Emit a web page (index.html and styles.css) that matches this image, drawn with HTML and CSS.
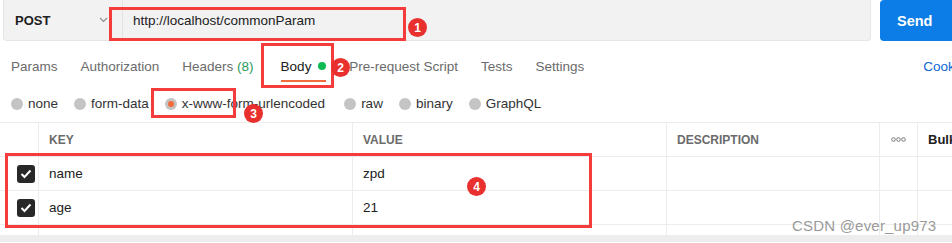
FILE: index.html
```html
<!DOCTYPE html>
<html lang="en">
<head>
    <meta charset="UTF-8">
    <title>POST commonParam</title>
    <link rel="stylesheet" href="styles.css">
</head>
<body>
    <div class="page">
        <!-- Request bar -->
        <div class="request-bar">
            <div class="url-box">
                <div class="method">
                    <span>POST</span>
                    <svg class="chevron" width="9" height="6" viewBox="0 0 9 6"><path d="M1 1l3.5 3.5L8 1" fill="none" stroke="#8a8a8a" stroke-width="1.1"/></svg>
                </div>
                <div class="url">http://localhost/commonParam</div>
            </div>
            <button class="send-btn">Send</button>
        </div>

        <!-- Tabs -->
        <div class="tabs">
            <span class="tab">Params</span>
            <span class="tab">Authorization</span>
            <span class="tab">Headers <em class="count">(8)</em></span>
            <span class="tab active">Body <i class="dot"></i></span>
            <span class="tab">Pre-request Script</span>
            <span class="tab">Tests</span>
            <span class="tab">Settings</span>
            <span class="tab cookies">Cookies</span>
        </div>

        <!-- Body types -->
        <div class="body-types">
            <label class="radio"><i class="circle"></i>none</label>
            <label class="radio"><i class="circle"></i>form-data</label>
            <label class="radio"><i class="circle checked"></i>x-www-form-urlencoded</label>
            <label class="radio"><i class="circle"></i>raw</label>
            <label class="radio"><i class="circle"></i>binary</label>
            <label class="radio"><i class="circle"></i>GraphQL</label>
        </div>

        <!-- Params table -->
        <div class="table-wrap">
            <div class="table">
                <div class="cell head"></div>
                <div class="cell head">KEY</div>
                <div class="cell head">VALUE</div>
                <div class="cell head">DESCRIPTION</div>
                <div class="cell head more">
                    <svg width="15" height="5" viewBox="0 0 15 5"><circle cx="2.5" cy="2.5" r="1.8" fill="none" stroke="#6b6b6b" stroke-width="0.9"/><circle cx="7.5" cy="2.5" r="1.8" fill="none" stroke="#6b6b6b" stroke-width="0.9"/><circle cx="12.5" cy="2.5" r="1.8" fill="none" stroke="#6b6b6b" stroke-width="0.9"/></svg>
                </div>
                <div class="cell head bulk">Bulk Edit</div>

                <div class="cell check"><span class="checkbox"><svg width="12" height="10" viewBox="0 0 12 10"><path d="M1.5 5l3 3 6-6.5" fill="none" stroke="#fff" stroke-width="2"/></svg></span></div>
                <div class="cell">name</div>
                <div class="cell">zpd</div>
                <div class="cell"></div>
                <div class="cell"></div>
                <div class="cell"></div>

                <div class="cell check"><span class="checkbox"><svg width="12" height="10" viewBox="0 0 12 10"><path d="M1.5 5l3 3 6-6.5" fill="none" stroke="#fff" stroke-width="2"/></svg></span></div>
                <div class="cell">age</div>
                <div class="cell">21</div>
                <div class="cell"></div>
                <div class="cell"></div>
                <div class="cell"></div>

                <div class="cell"></div>
                <div class="cell placeholder">Key</div>
                <div class="cell placeholder">Value</div>
                <div class="cell placeholder">Description</div>
                <div class="cell"></div>
                <div class="cell"></div>
            </div>
        </div>
        <div class="scrollbar"></div>

        <!-- Annotations -->
        <div class="mark box1"></div>
        <div class="badge b1">1</div>
        <div class="mark box2"></div>
        <div class="badge b2">2</div>
        <div class="mark box3"></div>
        <div class="badge b3">3</div>
        <div class="mark box4"></div>
        <div class="badge b4">4</div>

        <div class="watermark">CSDN @ever_up973</div>
    </div>
</body>
</html>
```

FILE: styles.css
```css
* {
    margin: 0;
    padding: 0;
    box-sizing: border-box;
}

body {
    font-family: 'Liberation Sans', Arial, sans-serif;
    background: #fff;
    color: #212121;
    font-size: 13.5px;
}

.page {
    position: relative;
    width: 952px;
    height: 243px;
    overflow: hidden;
}

/* Request bar */
.request-bar {
    display: flex;
    height: 41px;
}

.url-box {
    display: flex;
    margin-left: 3px;
    width: 868px;
    background: #f2f2f2;
    border: 1px solid #e6e6e6;
    border-top: none;
    border-radius: 0 0 4px 4px;
}

.method {
    display: flex;
    align-items: center;
    justify-content: space-between;
    width: 119px;
    padding: 0 14px 0 11px;
    border-right: 1px solid #e3e3e3;
    font-weight: bold;
    font-size: 13px;
    color: #212121;
}

.url {
    display: flex;
    align-items: center;
    padding-left: 10px;
    color: #212121;
}

.send-btn {
    margin-left: 9px;
    flex: 1;
    border: none;
    background: #0c7ce6;
    color: #fff;
    font-family: inherit;
    font-weight: bold;
    font-size: 14.5px;
    text-align: left;
    padding-left: 17px;
    border-radius: 4px 0 0 4px;
}

/* Tabs */
.tabs {
    display: flex;
    align-items: center;
    gap: 23px;
    height: 47px;
    padding: 4px 0 0 11px;
    color: #6b6b6b;
}

.tab {
    position: relative;
    white-space: nowrap;
}

.tab .count {
    font-style: normal;
    color: #2a9a5a;
}

.tab.active {
    color: #212121;
    margin-left: 4px;
}

.tab.active::after {
    content: "";
    position: absolute;
    left: 0;
    right: 0;
    bottom: -8px;
    height: 2px;
    background: #f26b3a;
}

.dot {
    display: inline-block;
    width: 8px;
    height: 8px;
    margin-left: 3px;
    border-radius: 50%;
    background: #0cbb52;
    vertical-align: 1px;
}

.cookies {
    margin-left: auto;
    margin-right: -20px;
    color: #0b68d4;
}

/* Body types */
.body-types {
    display: flex;
    align-items: center;
    gap: 16px;
    height: 35px;
    padding-left: 11px;
    padding-bottom: 3px;
    border-bottom: 1px solid #ececec;
    color: #333;
    font-size: 13.5px;
}

.radio {
    display: flex;
    align-items: center;
    gap: 5px;
}

.radio:nth-child(4) {
    margin-left: 3px;
}

.circle {
    width: 12px;
    height: 12px;
    border-radius: 50%;
    background: #c4c4c4;
    position: relative;
}

.circle.checked::after {
    content: "";
    position: absolute;
    top: 3px;
    left: 3px;
    width: 6px;
    height: 6px;
    border-radius: 50%;
    background: #f26b3a;
}

/* Table */
.table-wrap {
    height: 112px;
    overflow: hidden;
}

.table {
    display: grid;
    grid-template-columns: 39px 314px 314px 213px 38px 34px;
    grid-auto-rows: 34px;
}

.cell {
    display: flex;
    align-items: center;
    padding-left: 10px;
    border-right: 1px solid #ececec;
    border-bottom: 1px solid #ececec;
    white-space: nowrap;
    overflow: hidden;
    color: #212121;
}

.cell.head {
    font-weight: bold;
    font-size: 12px;
    color: #6b6b6b;
}

.cell.more {
    padding-left: 11px;
}

.cell.bulk {
    color: #212121;
    font-size: 13px;
}

.cell:nth-child(6n) {
    border-right: none;
}

.cell.check {
    padding-left: 17px;
}

.checkbox {
    display: flex;
    align-items: center;
    justify-content: center;
    width: 18px;
    height: 18px;
    border-radius: 3px;
    background: #282828;
}

.placeholder {
    color: #a6a6a6;
}

.scrollbar {
    height: 7px;
    background: #ededed;
}

/* Annotations */
.mark {
    position: absolute;
    border: 3px solid #f53c3c;
}

.box1 { left: 109px; top: 7px; width: 297px; height: 34px; }
.box2 { left: 261px; top: 43px; width: 73px; height: 45px; }
.box3 { left: 151px; top: 88px; width: 85px; height: 30px; }
.box4 { left: 5px; top: 153px; width: 587px; height: 75px; }

.badge {
    position: absolute;
    width: 19px;
    height: 19px;
    border-radius: 50%;
    background: #e8302e;
    color: #fff;
    font-size: 12px;
    font-weight: bold;
    display: flex;
    align-items: center;
    justify-content: center;
}

.b1 { left: 408px; top: 18px; }
.b2 { left: 331px; top: 58px; }
.b3 { left: 244px; top: 104px; }
.b4 { left: 467px; top: 177px; }

.watermark {
    position: absolute;
    left: 792px;
    top: 217px;
    font-size: 15px;
    color: #9a9a9a;
    letter-spacing: 0.2px;
}
```
